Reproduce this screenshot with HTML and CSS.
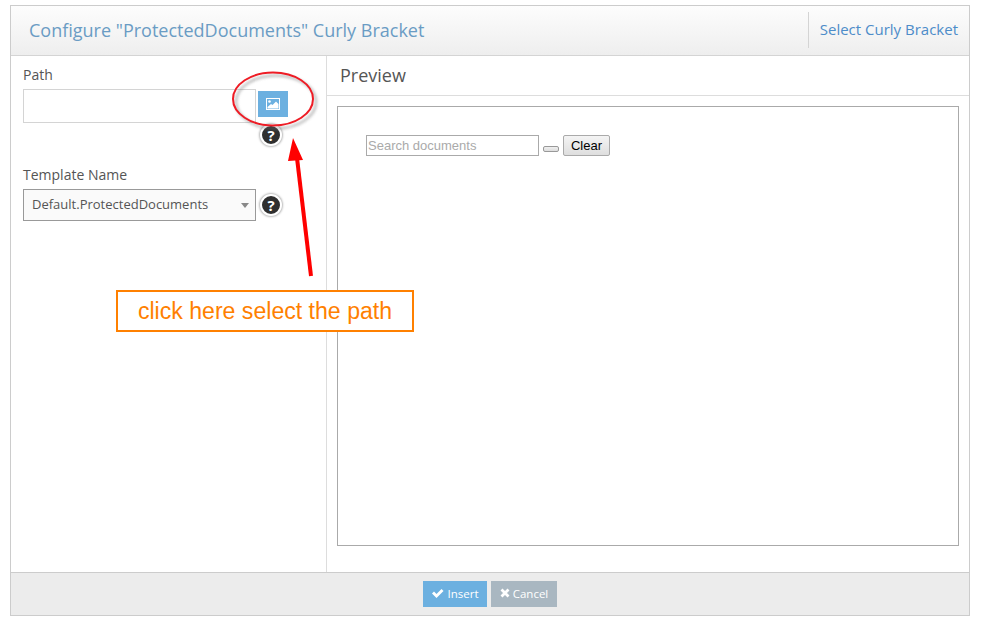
FILE: index.html
```
<!DOCTYPE html>
<html lang="en">
<head>
<meta charset="utf-8">
<title>Configure Curly Bracket</title>
<link rel="stylesheet" href="styles.css">
</head>
<body>
<div class="dialog">
  <header class="head">
    <h1 class="title">Configure "ProtectedDocuments" Curly Bracket</h1>
    <a class="select-link">Select Curly Bracket</a>
  </header>
  <div class="main">
    <aside class="side">
      <div class="field field-path">
        <label class="label">Path</label>
        <div class="row">
          <div class="input"></div>
          <button class="pick">
            <svg width="14" height="12" viewBox="0 0 14 12"><rect x="0.5" y="0.5" width="13" height="11" fill="#6cb0e0" stroke="#fff"/><path d="M1.500 10.500V9L5 6l1.500 1L10 3.500l2.500 2.500v4.500z" fill="#fff"/><circle cx="3.500" cy="3.500" r="1.300" fill="#fff"/></svg>
          </button>
        </div>
        <div class="help-line"><span class="help">?</span></div>
      </div>
      <div class="field field-template">
        <label class="label">Template Name</label>
        <div class="row row-center">
          <div class="select">Default.ProtectedDocuments<i class="caret"></i></div>
          <span class="help">?</span>
        </div>
      </div>
    </aside>
    <section class="preview">
      <h2 class="preview-title">Preview</h2>
      <div class="frame">
        <div class="search">
          <div class="search-input">Search documents</div>
          <button class="mini"></button>
          <button class="clear">Clear</button>
        </div>
      </div>
    </section>
  </div>
  <footer class="foot">
    <button class="btn btn-insert">
      <svg width="13" height="11" viewBox="0 0 13 11"><path d="M1 5.500l2-2 2.500 2.500L10.500 1l2 2-7 7z" fill="#fff"/></svg>Insert
    </button>
    <button class="btn btn-cancel">
      <svg width="10" height="10" viewBox="0 0 10 10"><path d="M1.500 1.500l7 7M8.500 1.500l-7 7" stroke="#fff" stroke-width="2.800"/></svg>Cancel
    </button>
  </footer>
</div>
<svg class="marks" width="982" height="630" viewBox="0 0 982 630">
  <defs>
    <filter id="soft" x="-20%" y="-20%" width="140%" height="150%"><feGaussianBlur stdDeviation="1.500"/></filter>
  </defs>
  <ellipse cx="273" cy="99" rx="40" ry="26.500" fill="none" stroke="#777" stroke-width="2" opacity="0.6" filter="url(#soft)" transform="translate(3 3)"/>
  <ellipse cx="273" cy="99" rx="40" ry="26.500" fill="none" stroke="#ee1c25" stroke-width="2"/>
  <path d="M311 276L297 158" stroke="#f00" stroke-width="4" fill="none"/>
  <path d="M293 138L303 160L288 161z" fill="#f00"/>
</svg>
<div class="note">click here select the path</div>
</body>
</html>
```
FILE: styles.css
```
* { box-sizing: border-box; }
html, body { margin: 0; height: 630px; overflow: hidden; background: #fff; }
body { padding: 5px 12px 0 10px; font-family: "Open Sans", sans-serif; color: #555; position: relative; }
.dialog { width: 960px; height: 611px; border: 1px solid #ccc; display: flex; flex-direction: column; }
.head { height: 50px; flex: none; border-bottom: 1px solid #d4d4d4; background: linear-gradient(#fdfdfd, #eeeeee); display: flex; align-items: center; justify-content: space-between; padding: 0 11px 0 18px; }
.title { margin: 0 0 2px; font-size: 18px; font-weight: 400; color: #6a9cc4; line-height: 48px; }
.select-link { font-size: 15px; color: #4d8cc9; border-left: 1px solid #d4d4d4; height: 36px; line-height: 34px; padding-left: 11px; margin-top: -1px; }
.main { flex: 1; display: flex; min-height: 0; }
.side { width: 316px; flex: none; border-right: 1px solid #ddd; padding: 10px 0 0 12px; }
.label { display: block; font-size: 14px; line-height: 18px; color: #555; }
.field-path { height: 100px; }
.row { display: flex; align-items: flex-start; margin-top: 5px; }
.row-center { align-items: center; margin-top: 5px; }
.input { width: 233px; height: 34px; border: 1px solid #d4d4d4; }
.pick { width: 30px; height: 26px; margin: 2px 0 0 2px; border: 0; padding: 0; background: #6cb0e0; display: flex; align-items: center; justify-content: center; }
.help-line { padding-left: 237px; margin-top: 1px; height: 22px; }
.help { width: 22px; height: 22px; border-radius: 50%; background: #2f2f2f; border: 2px solid #fff; box-shadow: 0 0 2px 1px #bbb; color: #fff; font: 700 15px/18px "Open Sans", sans-serif; text-align: center; display: block; flex: none; }
.row-center .help { margin-left: 4px; }
.select { width: 233px; height: 32px; border: 1px solid #999; background: #fafafa; font-size: 13px; line-height: 29px; padding-left: 8px; color: #555; position: relative; }
.caret { position: absolute; right: 6px; top: 13px; border: 4px solid transparent; border-top: 5px solid #888; border-bottom: 0; }
.preview { flex: 1; display: flex; flex-direction: column; min-width: 0; }
.preview-title { margin: 0; height: 40px; padding: 0 0 0 13px; font-size: 18px; font-weight: 400; line-height: 39px; color: #555; border-bottom: 1px solid #ddd; }
.frame { width: 622px; height: 440px; margin: 10px 0 0 10px; border: 1px solid #aaa; padding: 28px 0 0 28px; }
.search { display: flex; align-items: center; font-family: "Liberation Sans", sans-serif; }
.search-input { width: 173px; height: 21px; border: 1px solid #aaa; font-size: 13px; line-height: 19px; padding-left: 1px; color: #aaa; }
.mini { width: 16px; height: 6px; margin: 7px 0 0 4px; padding: 0; border: 1px solid #999; border-radius: 2px; background: linear-gradient(#f0f0f0, #ddd); }
.clear { width: 47px; height: 21px; margin-left: 4px; padding: 0; border: 1px solid #aaa; border-radius: 2px; background: linear-gradient(#f4f4f4, #dedede); font: 13px "Liberation Sans", sans-serif; color: #000; }
.foot { height: 43px; flex: none; border-top: 1px solid #ccc; background: #ececec; display: flex; justify-content: center; align-items: center; gap: 4px; }
.btn { height: 26px; border: 0; padding: 0 0 2px; color: #fff; font: 11.500px "Open Sans", sans-serif; display: flex; align-items: center; justify-content: center; gap: 3px; }
.btn-insert { width: 64px; background: #6cb0e0; }
.btn-cancel { width: 66px; background: #a9b7c1; }
.marks { position: absolute; left: 0; top: 0; pointer-events: none; }
.note { position: absolute; left: 116px; top: 290px; width: 298px; height: 42px; border: 2px solid #ff8000; background: #fff; color: #ff8000; font: 23.100px/38px "Liberation Sans", sans-serif; text-align: center; }
```
